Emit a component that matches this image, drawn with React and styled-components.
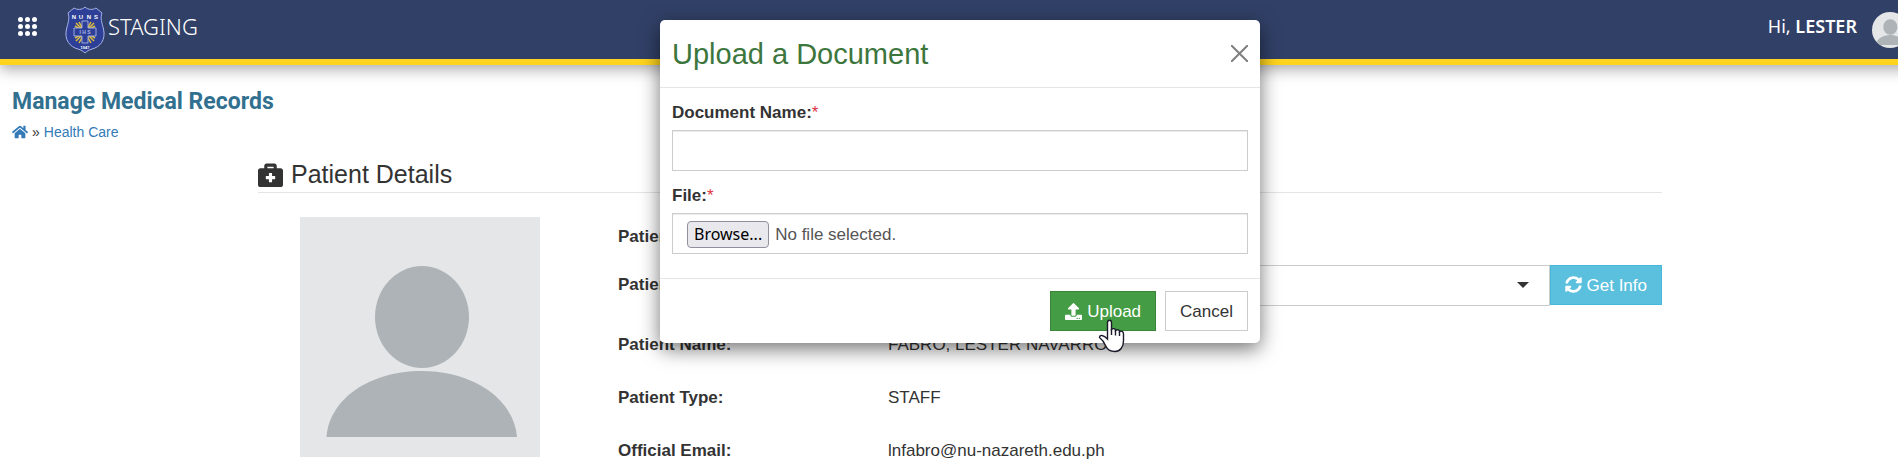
import React from "react";
import styled, { createGlobalStyle } from "styled-components";
import {
    FaBriefcaseMedical,
    FaHome,
    FaSyncAlt,
    FaUpload,
} from "react-icons/fa";

const SANS = `"Liberation Sans", Arial, sans-serif`;
const BRAND = `"Noto Sans", "Open Sans", sans-serif`;

const GlobalStyle = createGlobalStyle`
    * {
        box-sizing: border-box;
    }

    body {
        margin: 0;
        overflow: hidden;
        color: #333;
        background: #fff;
        font-family: ${SANS};
        font-size: 17px;
        line-height: 24px;
    }
`;

const Page = styled.div`
    width: calc(100% + 22px);
`;

const TopBar = styled.header`
    display: flex;
    align-items: center;
    height: 65px;
    padding: 0 12px 0 18px;
    color: #fff;
    background: #314067;
    border-bottom: 6px solid #ffd41f;
    box-shadow: 0 4px 14px rgba(0, 0, 0, 0.35);
    font-family: ${BRAND};
`;

const MenuButton = styled.button`
    display: flex;
    padding: 0 0 6px;
    margin-right: 28px;
    border: 0;
    background: none;
`;

const Brand = styled.a`
    display: flex;
    align-items: center;
    gap: 3px;
    color: #fff;
    font-size: 22px;
    font-weight: 300;
    text-decoration: none;
`;

const BarText = styled.span`
    padding-bottom: 7px;

    strong {
        font-weight: 600;
    }
`;

const Greeting = styled.div`
    display: flex;
    align-items: center;
    gap: 15px;
    margin-left: auto;
    font-size: 18px;
`;

const RoundAvatar = styled.span`
    display: flex;
    width: 36px;
    height: 36px;
    border-radius: 50%;
    overflow: hidden;
`;

const PageHeading = styled.div`
    padding: 20px 12px 0;
`;

const PageTitle = styled.h1`
    margin: 0;
    color: #31708f;
    font-family: Roboto, ${BRAND};
    font-size: 23px;
    font-weight: 700;
    line-height: 34px;
`;

const Breadcrumb = styled.nav`
    display: flex;
    align-items: center;
    gap: 4px;
    padding-top: 2px;
    font-size: 14px;
    line-height: 22px;

    a {
        display: flex;
        color: #337ab7;
        text-decoration: none;
    }
`;

const Container = styled.main`
    max-width: 1440px;
    margin: 0 auto;
    padding: 0 18px;
`;

const SectionTitle = styled.h2`
    display: flex;
    align-items: center;
    gap: 8px;
    margin: 15px 0 0;
    padding-bottom: 2px;
    border-bottom: 1px solid #e5e5e5;
    font-size: 25px;
    font-weight: 400;
    line-height: 32px;
`;

const Details = styled.div`
    display: grid;
    grid-template-columns: 1fr 3fr;
    margin: 0 -18px;
    padding-top: 24px;
`;

const Photo = styled.div`
    display: flex;
    justify-content: center;
`;

const Rows = styled.div`
    display: flex;
    flex-direction: column;
`;

const Row = styled.div`
    display: grid;
    grid-template-columns: 1fr 3fr;
    align-items: center;
    height: ${(props) => props.$height || 53}px;
    margin-bottom: ${(props) => props.$gap || 0}px;

    & > * {
        padding: 0 18px;
    }
`;

const RowLabel = styled.label`
    font-weight: 700;
`;

const PatientPicker = styled.div`
    display: flex;
`;

const SelectWrap = styled.div`
    position: relative;
    flex: 1;

    svg {
        position: absolute;
        top: 17px;
        right: 21px;
        pointer-events: none;
    }
`;

const Select = styled.select`
    width: 100%;
    height: 41px;
    appearance: none;
    border: 1px solid #ccc;
    border-radius: 0;
    background: #fff;
    font: inherit;
`;

const Button = styled.button`
    display: flex;
    align-items: center;
    gap: 5px;
    height: 40px;
    padding: 2px 14px 0;
    border: 1px solid ${(props) => props.$border};
    color: ${(props) => props.$color || "#fff"};
    background: ${(props) => props.$fill};
    font: inherit;
    white-space: nowrap;

    svg {
        margin-bottom: 2px;
    }
`;

const Overlay = styled.div`
    position: absolute;
    top: 20px;
    left: 0;
    right: -22px;
    display: flex;
    justify-content: center;
`;

const Dialog = styled.section`
    width: 600px;
    border-radius: 5px;
    background: #fff;
    box-shadow: 0 6px 20px rgba(0, 0, 0, 0.55);
`;

const DialogHeader = styled.div`
    display: flex;
    align-items: center;
    justify-content: space-between;
    height: 68px;
    padding: 0 12px;
    border-bottom: 1px solid #e5e5e5;

    h2 {
        margin: 0;
        color: #3c763d;
        font-size: 29px;
        font-weight: 400;
        line-height: 32px;
    }
`;

const CloseButton = styled.button`
    display: flex;
    padding: 0;
    border: 0;
    background: none;
`;

const DialogBody = styled.div`
    display: flex;
    flex-direction: column;
    gap: 12px;
    padding: 12px 12px 24px;
`;

const Field = styled.div`
    display: flex;
    flex-direction: column;
    gap: 4px;
`;

const FieldLabel = styled.label`
    font-weight: 700;
    line-height: 26px;

    span {
        color: #dc3545;
        font-weight: 400;
    }
`;

const TextInput = styled.input`
    height: 41px;
    padding: 6px 14px;
    border: 1px solid #ccc;
    border-radius: 0;
    box-shadow: inset 0 1px 1px rgba(0, 0, 0, 0.08);
    color: #555;
    font: inherit;
`;

const FileBox = styled.div`
    position: relative;
    display: flex;
    align-items: center;
    gap: 6px;
    height: 41px;
    padding: 2px 14px 0;
    border: 1px solid #ccc;
    box-shadow: inset 0 1px 1px rgba(0, 0, 0, 0.08);
    color: #555;

    input {
        position: absolute;
        inset: 0;
        width: 100%;
        opacity: 0;
    }
`;

const BrowseButton = styled.span`
    padding: 0 6px;
    border: 1px solid #8f8f9d;
    border-radius: 4px;
    color: #000;
    background: #e9e9ed;
    font-family: ${BRAND};
    font-size: 16px;
    line-height: 25px;
`;

const DialogFooter = styled.div`
    display: flex;
    justify-content: flex-end;
    gap: 9px;
    padding: 12px;
    border-top: 1px solid #e5e5e5;
`;

const Pointer = styled.svg`
    position: absolute;
    top: 319px;
    left: 1098px;
    pointer-events: none;
`;

function Person({ size }) {
    return (
        <svg width={size} height={size} viewBox="0 0 240 240" aria-hidden="true">
            <rect width="240" height="240" fill="#e4e6e7" />
            <ellipse cx="122" cy="100" rx="47" ry="51" fill="#aeb3b7" />
            <path
                d="M26.500 220C29 182 70 154 121.500 154S214 182 217 220Z"
                fill="#aeb3b7"
            />
        </svg>
    );
}

function GridIcon() {
    const steps = [2.5, 9.5, 16.5];
    return (
        <svg width="19" height="19" viewBox="0 0 19 19" fill="#fff">
            {steps.map((y) =>
                steps.map((x) => <circle key={`${x}-${y}`} cx={x} cy={y} r="2.5" />)
            )}
        </svg>
    );
}

function Crest() {
    return (
        <svg width="40" height="48" viewBox="0 0 40 48" aria-hidden="true">
            <path
                d="M20 1C17 4 12 4 9 2L3 7C5 12 3 17 1.500 23C-1 34 5 41 13 43C16 44 18 45 20 47C22 45 24 44 27 43C35 41 41 34 38.500 23C37 17 35 12 37 7L31 2C28 4 23 4 20 1Z"
                fill="#2d3f96"
                stroke="#a9b5e6"
                strokeWidth="1"
            />
            <g stroke="#e0bd3c" strokeWidth="1.5">
                <path d="M11 17L29 35M29 17L11 35M14 16L26 37M26 16L14 37M10 20L30 32M30 20L10 32" />
            </g>
            <path
                d="M17 15H23V22H31V30H23V37H17V30H9V22H17Z"
                fill="#2d3f96"
                stroke="#a9b5e6"
                strokeWidth="0.9"
            />
            <g fill="#fff" textAnchor="middle" fontFamily="Liberation Sans" fontWeight="700">
                <text x="20" y="13" fontSize="6">
                    <tspan x="9">N</tspan>
                    <tspan x="16">U</tspan>
                    <tspan x="24">N</tspan>
                    <tspan x="31">S</tspan>
                </text>
                <text x="20" y="28" fontSize="5" fill="#a9b5e6">I H S</text>
                <text x="20" y="43" fontSize="4">1947</text>
            </g>
        </svg>
    );
}

const patient = [
    { label: "Patient Name:", value: "FABRO, LESTER NAVARRO" },
    { label: "Patient Type:", value: "STAFF" },
    { label: "Official Email:", value: "lnfabro@nu-nazareth.edu.ph" },
];

export default function App() {
    return (
        <Page>
            <GlobalStyle />
            <TopBar>
                <MenuButton type="button" aria-label="Apps">
                    <GridIcon />
                </MenuButton>
                <Brand href="#">
                    <Crest />
                    <BarText>STAGING</BarText>
                </Brand>
                <Greeting>
                    <BarText>
                        Hi, <strong>LESTER</strong>
                    </BarText>
                    <RoundAvatar>
                        <Person size={36} />
                    </RoundAvatar>
                </Greeting>
            </TopBar>

            <PageHeading>
                <PageTitle>Manage Medical Records</PageTitle>
                <Breadcrumb>
                    <a href="#" aria-label="Home">
                        <FaHome size={16} />
                    </a>
                    <span>»</span>
                    <a href="#">Health Care</a>
                </Breadcrumb>
            </PageHeading>

            <Container>
                <SectionTitle>
                    <FaBriefcaseMedical size={25} />
                    Patient Details
                </SectionTitle>
                <Details>
                    <Photo>
                        <Person size={240} />
                    </Photo>
                    <Rows>
                        <Row $height={40}>
                            <RowLabel as="span">Patient ID:</RowLabel>
                        </Row>
                        <Row $height={56} $gap={5}>
                            <RowLabel htmlFor="patient">Patient:</RowLabel>
                            <PatientPicker>
                                <SelectWrap>
                                    <Select id="patient" />
                                    <svg width="12" height="6" viewBox="0 0 12 6">
                                        <path d="M0 0H12L6 6Z" fill="#333" />
                                    </svg>
                                </SelectWrap>
                                <Button type="button" $fill="#5bc0de" $border="#46b8da">
                                    <FaSyncAlt size={17} />
                                    Get Info
                                </Button>
                            </PatientPicker>
                        </Row>
                        {patient.map((item) => (
                            <Row key={item.label}>
                                <RowLabel as="span">{item.label}</RowLabel>
                                <span>{item.value}</span>
                            </Row>
                        ))}
                    </Rows>
                </Details>
            </Container>

            <Overlay>
                <Dialog role="dialog" aria-labelledby="upload-title">
                    <DialogHeader>
                        <h2 id="upload-title">Upload a Document</h2>
                        <CloseButton type="button" aria-label="Close">
                            <svg width="17" height="17" viewBox="0 0 17 17">
                                <path d="M0 0L17 17M17 0L0 17" stroke="#7f7f7f" strokeWidth="2" />
                            </svg>
                        </CloseButton>
                    </DialogHeader>
                    <DialogBody>
                        <Field>
                            <FieldLabel htmlFor="doc-name">
                                Document Name:<span>*</span>
                            </FieldLabel>
                            <TextInput id="doc-name" type="text" />
                        </Field>
                        <Field>
                            <FieldLabel htmlFor="doc-file">
                                File:<span>*</span>
                            </FieldLabel>
                            <FileBox>
                                <BrowseButton>Browse...</BrowseButton>
                                <span>No file selected.</span>
                                <input id="doc-file" type="file" />
                            </FileBox>
                        </Field>
                    </DialogBody>
                    <DialogFooter>
                        <Button type="button" $fill="#449d44" $border="#398439">
                            <FaUpload size={17} />
                            Upload
                        </Button>
                        <Button type="button" $fill="#fff" $border="#ccc" $color="#333">
                            Cancel
                        </Button>
                    </DialogFooter>
                </Dialog>
            </Overlay>

            <Pointer width="27" height="34" viewBox="0 0 27 34">
                <path
                    d="M9.500 18V3.500C9.500 0.500 13.500 0.500 13.500 3.500V10.500C15 9 17.500 9.500 17.500 11.500C19.500 10 21.500 11 21.500 12.500C23.500 11.500 25.500 12.500 25.500 15V22C25.500 28 22 32.500 17 32.500C12 32.500 9 30 7.500 26.500C5.500 22 3.500 20 1.500 18.500C1.500 15.500 5.500 15.500 9.500 20Z"
                    fill="#fff"
                    stroke="#1a1a2a"
                    strokeWidth="1.4"
                />
                <path d="M13.500 10V16M17.500 11.500V16.500M21.500 12.500V17" stroke="#1a1a2a" strokeWidth="1.4" />
            </Pointer>
        </Page>
    );
}
